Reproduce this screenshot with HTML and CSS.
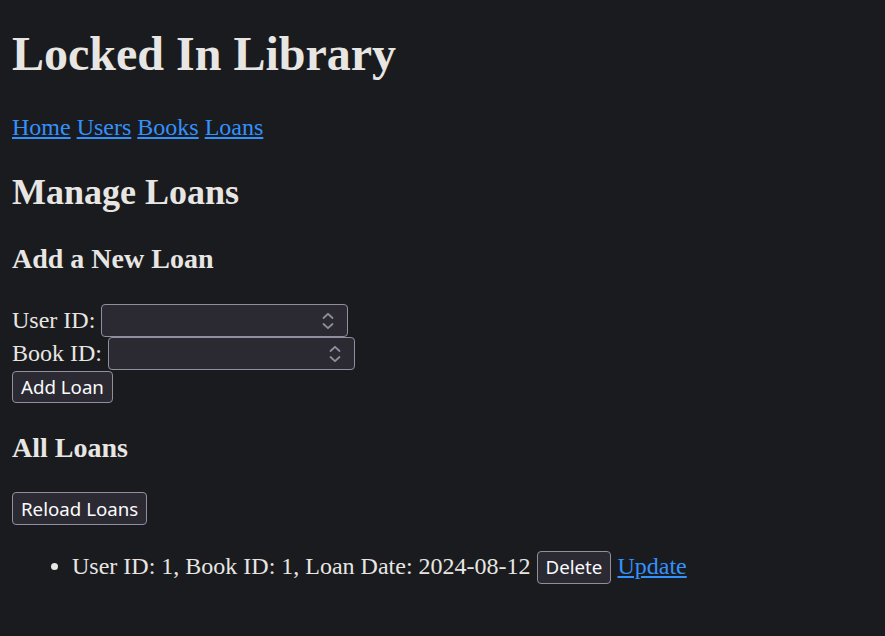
FILE: index.html
```html
<!DOCTYPE html>
<html lang="en">
<head>
<meta charset="utf-8">
<title>Locked In Library</title>
<link rel="stylesheet" href="styles.css">
</head>
<body>
<h1 class="title">Locked In Library</h1>
<nav class="nav"><a href="#">Home</a> <a href="#">Users</a> <a href="#">Books</a> <a href="#">Loans</a></nav>
<h2 class="page-title">Manage Loans</h2>
<h3 class="section-title">Add a New Loan</h3>
<form class="loan-form">
  <div class="row"><label class="lbl" for="uid">User ID:</label><span class="numbox"><input class="numinput" id="uid" type="text"><svg class="spin" width="12" height="18" viewBox="0 0 12 18"><path d="M1.5 6 L6 1.8 L10.5 6 M1.5 12 L6 16.2 L10.5 12" fill="none" stroke="#8f8f9d" stroke-width="1.8" stroke-linecap="round" stroke-linejoin="round"/></svg></span></div>
  <div class="row"><label class="lbl" for="bid">Book ID:</label><span class="numbox"><input class="numinput" id="bid" type="text"><svg class="spin" width="12" height="18" viewBox="0 0 12 18"><path d="M1.5 6 L6 1.8 L10.5 6 M1.5 12 L6 16.2 L10.5 12" fill="none" stroke="#8f8f9d" stroke-width="1.8" stroke-linecap="round" stroke-linejoin="round"/></svg></span></div>
  <button class="btn btn-add" type="button">Add Loan</button>
</form>
<h3 class="section-title">All Loans</h3>
<button class="btn" type="button">Reload Loans</button>
<ul class="loan-list">
  <li class="loan-item">User ID: 1, Book ID: 1, Loan Date: 2024-08-12 <button class="btn btn-inline" type="button">Delete</button> <a href="#">Update</a></li>
</ul>
</body>
</html>
```
FILE: styles.css
```css
html { background: #1a1b1e; }
body {
  margin: 0 12px;
  color: #e8e6e3;
  font-family: "Liberation Serif", "Times New Roman", serif;
  font-size: 24px;
  background: #1a1b1e;
}
a { color: #3391ff; text-decoration: underline; }
.title {
  font-size: 48px;
  margin: 26px 0 33px;
  line-height: 55px;
}
.nav { margin: 24px 0; line-height: 27.6px; }
.page-title { font-size: 36px; margin: 30px 0; line-height: 41.4px; }
.section-title { font-size: 28px; margin: 28px 0; line-height: 32.2px; }
.loan-form { padding-top: 1px; padding-bottom: 1px; }
.row {
  display: flex;
  align-items: center;
  height: 33px;
  gap: 6px;
}
.numbox {
  display: flex;
  align-items: center;
  box-sizing: border-box;
  width: 247px;
  height: 33px;
  background: #2b2a33;
  border: 1px solid #8f8f9d;
  border-radius: 4px;
  padding-right: 13px;
}
.numinput {
  flex: 1;
  min-width: 0;
  background: transparent;
  border: 0;
  outline: none;
  color: #e8e6e3;
  font: 20px "Noto Sans", sans-serif;
  padding: 0 4px;
}
.spin { display: block; }
.btn {
  box-sizing: border-box;
  height: 33px;
  padding: 0 8px;
  background: #2b2a33;
  color: #fbfbfe;
  border: 1px solid #8f8f9d;
  border-radius: 4px;
  font-family: "Noto Sans", "Segoe UI", sans-serif;
  font-size: 18.7px;
  line-height: 28px;
}
.btn-add { margin-top: 1px; display: block; height: 32px; }
.loan-list { margin: 25px 0 24px; padding-left: 60px; }
.loan-item { line-height: 33px; }
.btn-inline { vertical-align: baseline; }
```
